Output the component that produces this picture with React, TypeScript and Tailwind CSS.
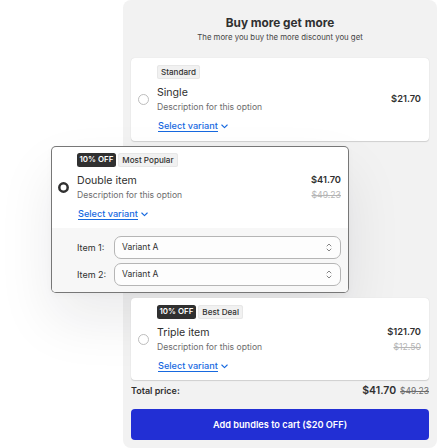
import { ReactNode } from 'react'
import clsx from 'clsx'

type OptionProps = {
  title: string
  price: string
  oldPrice?: string
  discount?: string
  tag: string
  selected?: boolean
}

function Badge({ children, dark }: { children: ReactNode; dark?: boolean }) {
  return (
    <span
      className={clsx(
        'flex h-3.5 items-center whitespace-nowrap rounded-[2.5px]',
        dark
          ? 'bg-[#303030] px-[2.5px] text-[7.9px] font-semibold text-white'
          : 'bg-[#f1f1f1] px-[4px] text-[8.1px] font-medium text-[#303030] ring-1 ring-inset ring-[#e7e7e7]'
      )}
    >
      {children}
    </span>
  )
}

function Radio({ selected }: { selected?: boolean }) {
  return (
    <svg width="11" height="11" viewBox="0 0 11 11" fill="#fff" className="shrink-0">
      {selected ? (
        <circle cx="5.5" cy="5.5" r="4.2" stroke="#303030" strokeWidth="2.5" />
      ) : (
        <circle cx="5.5" cy="5.5" r="5" stroke="#b5b5b5" strokeWidth="0.9" />
      )}
    </svg>
  )
}

function Option({ title, price, oldPrice, discount, tag, selected }: OptionProps) {
  return (
    <div className="flex h-[82px] items-center pl-[7px] pr-2">
      <Radio selected={selected} />
      <div className="ml-2 flex h-full flex-1 flex-col items-start pt-[7px]">
        <div className="flex gap-[2.5px]">
          {discount && <Badge dark>{discount}</Badge>}
          <Badge>{tag}</Badge>
        </div>
        <h2 className="mt-[7px] text-[10.6px] leading-[14px] text-[#303030]">{title}</h2>
        <p className="mt-px text-[8.6px] leading-3 text-[#6d6d6d]">Description for this option</p>
        <button className="ml-px mt-[7px] flex items-center gap-[3px] text-[9.15px] font-medium leading-[11px] text-[#1769df]">
          <span className="border-b border-[#1769df]">Select variant</span>
          <svg width="7" height="5" viewBox="0 0 7 5" fill="none" stroke="currentColor" strokeWidth="1.1">
            <path d="M0.8 1L3.5 3.6L6.2 1" strokeLinecap="round" strokeLinejoin="round" />
          </svg>
        </button>
      </div>
      <div className="text-right">
        <div className="text-[9.3px] font-semibold leading-[14px] text-[#303030]">{price}</div>
        {oldPrice && (
          <div className="mt-px text-[8.7px] leading-[14px] text-[#b5b5b5] line-through">{oldPrice}</div>
        )}
      </div>
    </div>
  )
}

function VariantSelect({ label }: { label: string }) {
  return (
    <div className="flex items-center">
      <span className="w-[37px] text-[9px] text-[#303030]">{label}</span>
      <button className="flex h-[23px] flex-1 items-center justify-between rounded-[7px] border border-[#b5b5b5] bg-[#fdfdfd] pl-[7px] pr-2 text-[8.5px] text-[#303030]">
        Variant A
        <svg width="6" height="9" viewBox="0 0 6 9" fill="none" stroke="#777" strokeWidth="0.9">
          <path d="M1 3L3 1L5 3M1 6L3 8L5 6" strokeLinecap="round" strokeLinejoin="round" />
        </svg>
      </button>
    </div>
  )
}

export default function App() {
  return (
    <main className="h-[448px] w-[437px] overflow-hidden bg-white pl-[123px] font-['Inter',sans-serif]">
      <section className="flex h-full flex-col rounded-[8px] bg-[#f2f2f2] px-2">
        <header className="h-[58px] pt-[15px] text-center">
          <h1 className="text-[11.8px] font-bold leading-4 text-[#303030]">Buy more get more</h1>
          <p className="text-[7.8px] leading-3 text-[#454545]">The more you buy the more discount you get</p>
        </header>

        <div className="h-[83px] rounded-[4px] bg-white shadow-[0_0_1px_#cfcfcf,0_1px_1px_#cfcfcf]">
          <Option title="Single" price="$21.70" tag="Standard" />
        </div>

        <div className="relative -ml-20 mt-[5px] h-[147px] w-[298px] shrink-0 rounded-[5px] bg-white shadow-[0_27px_55px_rgba(20,25,40,0.085),0_2px_6px_rgba(0,0,0,0.03)] ring-1 ring-inset ring-[#777]">
          <Option
            title="Double item"
            price="$41.70"
            oldPrice="$49.23"
            discount="10% OFF"
            tag="Most Popular"
            selected
          />
          <div className="mx-px flex h-16 flex-col gap-1 rounded-b-[4px] bg-[#f7f7f7] pl-[25px] pr-[7px] pt-2">
            <VariantSelect label="Item 1:" />
            <VariantSelect label="Item 2:" />
          </div>
        </div>

        <div className="relative mt-[5px] rounded-[4px] bg-white shadow-[0_0_1px_#cfcfcf,0_1px_1px_#cfcfcf]">
          <Option title="Triple item" price="$121.70" oldPrice="$12.50" discount="10% OFF" tag="Best Deal" />
        </div>

        <div className="relative mt-1 flex h-[14px] items-center text-[#303030]">
          <span className="flex-1 text-[9px] font-semibold">Total price:</span>
          <span className="text-[10.5px] font-semibold">$41.70</span>
          <span className="ml-1 text-[8.5px] text-[#6d6d6d] line-through">$49.23</span>
        </div>

        <button className="relative mt-[11px] h-[31px] rounded-[4px] bg-[#222fd4] text-[9.2px] font-semibold text-white">
          Add bundles to cart ($20 OFF)
        </button>
      </section>
    </main>
  )
}
